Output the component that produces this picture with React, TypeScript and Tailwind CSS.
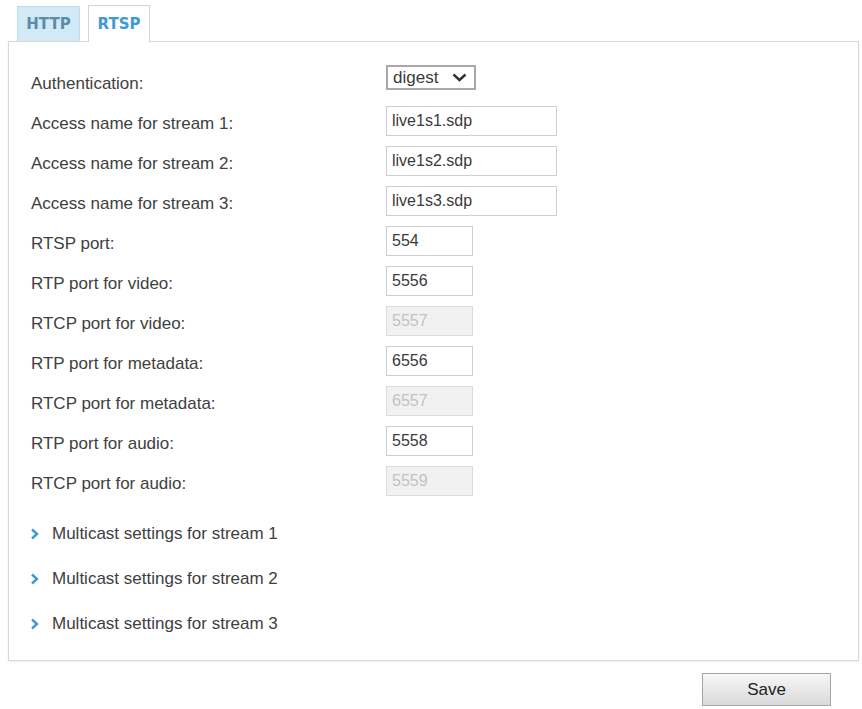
import React from 'react'

type Row = {
  label: string
  value: string
  kind: 'select' | 'wide' | 'short' | 'disabled'
}

const rows: Row[] = [
  { label: 'Authentication:', value: 'digest', kind: 'select' },
  { label: 'Access name for stream 1:', value: 'live1s1.sdp', kind: 'wide' },
  { label: 'Access name for stream 2:', value: 'live1s2.sdp', kind: 'wide' },
  { label: 'Access name for stream 3:', value: 'live1s3.sdp', kind: 'wide' },
  { label: 'RTSP port:', value: '554', kind: 'short' },
  { label: 'RTP port for video:', value: '5556', kind: 'short' },
  { label: 'RTCP port for video:', value: '5557', kind: 'disabled' },
  { label: 'RTP port for metadata:', value: '6556', kind: 'short' },
  { label: 'RTCP port for metadata:', value: '6557', kind: 'disabled' },
  { label: 'RTP port for audio:', value: '5558', kind: 'short' },
  { label: 'RTCP port for audio:', value: '5559', kind: 'disabled' },
]

function Field({ row }: { row: Row }) {
  if (row.kind === 'select') {
    return (
      <div className="mt-[-7px] flex h-[25px] w-[90px] items-center justify-between border-2 border-[#a9a9a9] bg-white pl-[5px] pr-[7px] text-[17px] leading-none text-[#3a3a3a]">
        <span>{row.value}</span>
        <svg width="15" height="9" viewBox="0 0 15 9">
          <polyline points="1.5,1.5 7.5,7 13.5,1.5" fill="none" stroke="#333" strokeWidth="2.4" />
        </svg>
      </div>
    )
  }
  const width = row.kind === 'wide' ? 'w-[171px]' : 'w-[87px]'
  const tone =
    row.kind === 'disabled'
      ? 'bg-[#f1f1f1] text-[#c2c2c2] border-[#dcdcdc]'
      : 'bg-white text-[#3a3a3a] border-[#cfcfcf]'
  return (
    <div className={`flex h-[30px] items-center border pl-[5px] text-[16px] leading-none ${width} ${tone}`}>
      {row.value}
    </div>
  )
}

function Arrow() {
  return (
    <svg width="9" height="12" viewBox="0 0 9 12">
      <polyline points="2,1.5 7,6 2,10.5" fill="none" stroke="#3b9ad6" strokeWidth="2.4" />
    </svg>
  )
}

export default function App() {
  return (
    <div
      className="min-h-screen bg-white pl-[8px] pt-[5px]"
      style={{ fontFamily: '"Liberation Sans", Arial, sans-serif' }}
    >
      <div className="w-[851px]">
        <div className="ml-[9px] flex items-end gap-[8px]">
          <div
            className="flex h-[35px] w-[63px] items-center justify-center border border-b-0 border-[#c3dbe9] bg-[#d2e9f6] text-[15px] font-bold text-[#5b8cab]"
            style={{ fontFamily: '"DejaVu Sans", Verdana, sans-serif' }}
          >
            HTTP
          </div>
          <div
            className="relative z-10 -mb-px flex h-[37px] w-[62px] items-center justify-center border border-b-0 border-[#d3d3d3] bg-white text-[15px] font-bold text-[#3d9bd4]"
            style={{ fontFamily: '"DejaVu Sans", Verdana, sans-serif' }}
          >
            RTSP
          </div>
        </div>

        <div className="border border-[#d8d8d8] pb-[14px] pt-[19px] shadow-[0_1px_2px_rgba(0,0,0,0.08)]">
          {rows.map(row => (
            <div key={row.label} className="flex h-10 items-center pl-[22px]">
              <div className="w-[355px] pt-[5px] text-[17px] text-[#404040]">{row.label}</div>
              <Field row={row} />
            </div>
          ))}

          <div className="mt-[10px]">
            {[1, 2, 3].map(n => (
              <div key={n} className="flex h-[45px] items-center pl-[21px]">
                <Arrow />
                <span className="ml-[13px] text-[17px] text-[#404040]">Multicast settings for stream {n}</span>
              </div>
            ))}
          </div>
        </div>

        <div className="mr-[28px] mt-[12px] flex justify-end">
          <button className="h-[33px] w-[129px] border border-[#a5a5a5] bg-gradient-to-b from-[#f7f7f7] to-[#dadada] text-[17px] text-[#222]">
            Save
          </button>
        </div>
      </div>
    </div>
  )
}
